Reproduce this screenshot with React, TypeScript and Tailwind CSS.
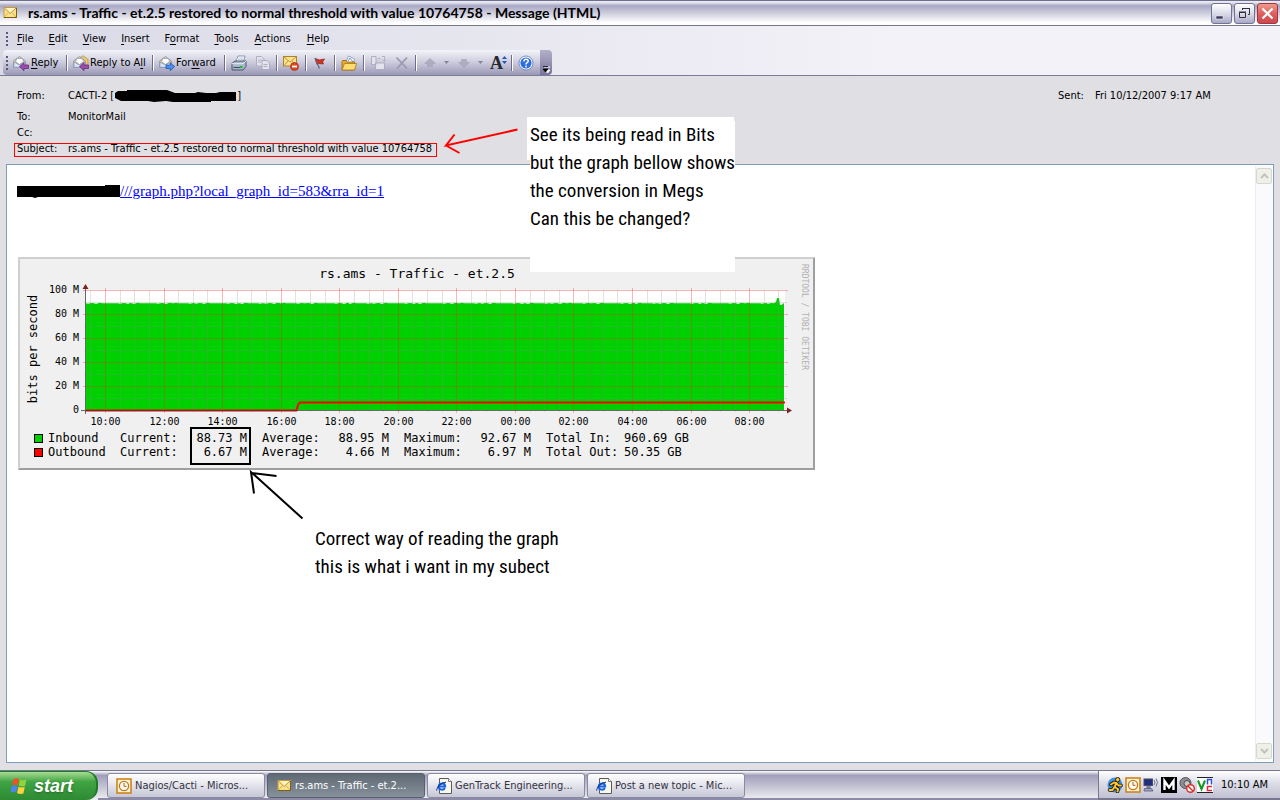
import type { ReactNode } from "react";
import { clsx } from "clsx";

const SUBJECT = "rs.ams - Traffic - et.2.5 restored to normal threshold with value 10764758";

/* ---------- Icons ---------- */

function Svg({ children, size = 16 }: { children: ReactNode; size?: number }) {
  return (
    <svg width={size} height={size} viewBox="0 0 16 16" className="shrink-0" aria-hidden="true">
      {children}
    </svg>
  );
}

const EnvelopeIcon = () => (
  <Svg>
    <rect x="2" y="2.500" width="12.500" height="10" fill="#fbe28a" stroke="#c29a3c" />
    <path d="M2.500 3 8.200 8.500 14 3" fill="#fff3c0" stroke="#b98f37" />
    <path d="M2.500 12 6.500 7.500M14 12 10 7.500" fill="none" stroke="#d5b04f" />
    <path d="M2 12.500h12.500V3" fill="none" stroke="#7d5c18" />
  </Svg>
);

function OpenLetter({ arrow, double }: { arrow: "left" | "right"; double?: boolean }) {
  return (
    <Svg>
      {double && <path d="M5.500 4 10 .7l5 3.800V10h-9z" fill="#f3c95a" stroke="#a9965c" strokeWidth=".8" />}
      <path d="M.6 6 6.500 1.500 12.400 6v6.500H.6z" fill="#f7d469" stroke="#8a93ad" strokeWidth=".9" />
      <path d="M2.500 6.500 4 3.500h5.500l1 3-4 3z" fill="#fff" stroke="#7d97c4" strokeWidth=".7" />
      <path d="M.9 7 6.500 10l5.600-3v5.300H.9z" fill="#d9e6f9" stroke="#8795b5" strokeWidth=".8" />
      {arrow === "left" ? (
        <path d="M6.500 11.500 11 7.800V10h4.500v3.500H11v2.200z" fill="#9c4cab" stroke="#5d2272" strokeWidth=".7" />
      ) : (
        <path d="M15.700 11.500 11.200 7.800V10H7v3.500h4.200v2.200z" fill="#4b8df0" stroke="#1c4ca6" strokeWidth=".7" />
      )}
    </Svg>
  );
}

const PrinterIcon = () => (
  <Svg>
    <path d="M5 6.500 7 1h7l-1.500 5.500z" fill="#fff" stroke="#7285a8" strokeWidth=".8" />
    <path d="M7.500 3h5M7 4.700h5" stroke="#a8b7d3" strokeWidth=".8" />
    <path d="M1 8.500 4 6h11v5.500L12 15H1z" fill="#a9b6c9" stroke="#3c4a63" strokeWidth=".9" />
    <path d="M1 8.700h11l3-2.500" fill="none" stroke="#e8eef7" />
    <path d="M2.500 12.500h7" stroke="#3c4a63" />
    <path d="M9 11h2.500v2H9z" fill="#1fbb2c" />
  </Svg>
);

const CopyIcon = () => (
  <Svg>
    <g fill="#e3e2ed" stroke="#a9a8bd" strokeWidth=".9">
      <path d="M1.500 1.500h5L9 4v7H1.500z" />
      <path d="M7 5.500h5L14.500 8v6.500H7z" />
      <path d="M3 5h4M3 7h3M8.500 9.500h4M8.500 11.500h4" />
    </g>
  </Svg>
);

const MoveIcon = () => (
  <Svg>
    <g fill="#e3e2ed" stroke="#a9a8bd" strokeWidth=".9">
      <path d="M1.500 1.500H6v8H1.500zM5.500 8h9v6.500h-9z" />
      <path d="M8 3.500h2M12 1.500h2.500v4M12.700 4.500l1.800 2 1.500-2" />
    </g>
  </Svg>
);

const DeleteMailIcon = () => (
  <Svg>
    <rect x=".5" y="1.500" width="13" height="9.500" fill="#fbe18a" stroke="#ab8330" />
    <path d="M.5 1.500 7 7l6.500-5.500M1 10.500 5 6M13 10.500 9 6" fill="none" stroke="#b98f37" strokeWidth=".9" />
    <circle cx="11.500" cy="11.500" r="4" fill="#dd4723" stroke="#a62b12" strokeWidth=".7" />
    <path d="M9 11.500h5" stroke="#fff" strokeWidth="1.800" />
  </Svg>
);

const FlagIcon = () => (
  <Svg>
    <path d="M3 3.500 7.500 5l5-1-2 3 1 2-5-.5-1.500 1z" fill="#d8321d" stroke="#8d1b10" strokeWidth=".7" />
    <path d="m3 3 4.500 10.500" stroke="#63637c" strokeWidth="1.200" />
  </Svg>
);

const FolderIcon = () => (
  <Svg>
    <path d="M5 7 7.500 1l6 3-1.500 5z" fill="#fff" stroke="#7b93bf" strokeWidth=".8" />
    <path d="M7 6 9 3l3 4" fill="none" stroke="#7b93bf" />
    <path d="M1 6.500V15h12.500V7H6L5 5.500H1.500z" fill="#e8ad2d" stroke="#95660f" strokeWidth=".8" />
    <path d="M1 15 3.500 8.500h12L13.500 15z" fill="#ffdc6f" stroke="#a5771b" strokeWidth=".8" />
  </Svg>
);

const CrossIcon = () => (
  <Svg>
    <path d="M2.500 2.500 13 13.500M13 2.500 3 13.500" stroke="#9a99ae" strokeWidth="1.800" />
  </Svg>
);

const ArrowIcon = ({ down }: { down?: boolean }) => (
  <Svg>
    <path
      d={down ? "M8 12.500 13.500 7.500h-3V4.500h-5v3h-3z" : "M8 3.500 13.500 8.500h-3v3h-5v-3h-3z"}
      fill="#aeadc0"
      stroke="#9f9db4"
      strokeWidth=".5"
    />
  </Svg>
);

const CaretIcon = () => (
  <svg width="5" height="3" viewBox="0 0 5 3" className="shrink-0" aria-hidden="true">
    <path d="M0 0h5L2.500 3z" fill="#8583a0" />
  </svg>
);

const HelpIcon = () => (
  <Svg>
    <circle cx="8" cy="8" r="7" fill="#fff" stroke="#5773b5" strokeWidth=".8" />
    <circle cx="8" cy="8" r="5.600" fill="#2e6fe0" />
    <path d="M5.900 6.400c0-2.800 4.300-2.600 4.300-.2C10.200 7.700 8 7.700 8 9.400" fill="none" stroke="#fff" strokeWidth="1.500" />
    <circle cx="8" cy="11.500" r=".9" fill="#fff" />
  </Svg>
);

const ClockIcon = () => (
  <Svg>
    <rect x="1" y="1" width="14" height="14" fill="#fdf3d6" stroke="#cf8419" strokeWidth="1.600" />
    <circle cx="8" cy="8" r="4.600" fill="#fffaf0" stroke="#c07a1c" strokeWidth="1.300" />
    <path d="M8 5v3.300h2.500" fill="none" stroke="#a86413" />
  </Svg>
);

const ExplorerIcon = () => (
  <Svg>
    <path d="M3.500.5h9l3 3v12h-12z" fill="#f8f8ec" stroke="#5a5a5a" />
    <path d="M12.500.5v3h3" fill="#fff" stroke="#5a5a5a" strokeWidth=".8" />
    <path d="M3 8.600h6.200C9.200 4.300 3 4.300 2.700 8.600c.2 3.600 4.800 4 6.200 1.400" fill="none" stroke="#1565e0" strokeWidth="2" />
    <path d="M.7 12.500C.3 9 5.500 4.300 10 4.300" fill="none" stroke="#12348c" strokeWidth="1.100" />
  </Svg>
);

const WindowsLogo = () => (
  <svg width="18" height="18" viewBox="0 0 18 18" aria-hidden="true">
    <path d="M3.500 2.500Q6 .5 9 2L7.700 8Q5 6.700 2 8.300z" fill="#f0532a" />
    <path d="M10 2.500q3 1.500 6.500 0L15 9q-3 1-6.300-.5z" fill="#8fd43c" />
    <path d="M1.700 9.300Q5 7.700 7.500 9L6 15.500Q3.500 14 .5 15.500z" fill="#4d86f0" />
    <path d="M8.500 9.700q3 1.300 6.300.3L13.300 16.500q-3 1-6.300-.5z" fill="#ffd23c" />
  </svg>
);

const RunnerIcon = () => (
  <Svg>
    <circle cx="8" cy="8" r="7.500" fill="#3f8fe0" />
    <g fill="none" strokeLinecap="round" strokeLinejoin="round">
      <path d="M9.500 6 7.500 10l3.500 2-.5 2.500M7.500 10 5.500 13H2.500M4 7.500l3-2 2.500.5 2 2.500H14" stroke="#111" strokeWidth="3.600" />
      <path d="M9.500 6 7.500 10l3.500 2-.5 2.500M7.500 10 5.500 13H2.500M4 7.500l3-2 2.500.5 2 2.500H14" stroke="#ffc62c" strokeWidth="2" />
    </g>
    <circle cx="10.700" cy="2.700" r="2.200" fill="#ffc62c" stroke="#111" strokeWidth=".9" />
  </Svg>
);

const NetworkIcon = () => (
  <Svg>
    <rect x="1" y="2" width="8.500" height="6.500" fill="#1f2f7d" stroke="#4b4b63" />
    <path d="M4 9h3v2H4zM1.500 11.500h7l1.500 2.500H1z" fill="#9fa6c4" stroke="#55597c" strokeWidth=".8" />
    <path d="M11 3q2 2.500 0 5M13 1.500q3 4 0 8" fill="none" stroke="#70708c" />
  </Svg>
);

const MIcon = () => (
  <Svg>
    <rect width="16" height="16" fill="#000" />
    <path d="M3.500 13V4L8 10.500 12.500 4v9" fill="none" stroke="#fff" strokeWidth="2.400" />
  </Svg>
);

const MutedIcon = () => (
  <Svg>
    <circle cx="6.500" cy="6" r="5.500" fill="#8e8e90" stroke="#55555a" />
    <circle cx="8" cy="6.500" r="3" fill="#c9c9cc" stroke="#4a4a50" />
    <circle cx="11.500" cy="11.500" r="3.800" fill="#fff" stroke="#d8332b" strokeWidth="1.500" />
    <path d="m9 9 5 5" stroke="#d8332b" strokeWidth="1.400" />
  </Svg>
);

const VncIcon = () => (
  <Svg>
    <rect width="16" height="16" fill="#fff" />
    <path d="M0 .5h16M0 15.500h16" stroke="#222" />
    <path d="M1 3.500 4.500 12 8 3.500" fill="none" stroke="#109a1d" strokeWidth="2" />
    <path d="M10.500 7.500v-5h4v5" fill="none" stroke="#2d4fe0" strokeWidth="1.500" />
    <path d="M15 9.500h-4.500v4H15" fill="none" stroke="#e02b3c" strokeWidth="1.500" />
  </Svg>
);

/* ---------- Window chrome ---------- */

function CaptionButton({ label, danger, children }: { label: string; danger?: boolean; children: ReactNode }) {
  return (
    <button
      type="button"
      aria-label={label}
      className={clsx(
        "flex size-[21px] items-center justify-center rounded-[3px] border",
        danger
          ? "border-[#a53440] bg-linear-to-b from-[#eb9a8d] via-[#e0605f] to-[#c9474f]"
          : "border-[#6f7396] bg-linear-to-b from-white via-[#dcdce9] to-[#a9a9c6]"
      )}
    >
      {children}
    </button>
  );
}

function TitleBar() {
  return (
    <div className="flex h-[26px] items-center border-t border-b border-t-[#716f8f] border-b-[#77768f] bg-linear-to-b from-[#e9e9f2] from-5% via-[#a9a8c4] via-20% to-white to-90% pr-0.5 pl-0.5">
      <EnvelopeIcon />
      <h1 className="ml-2.5 flex-1 font-[Lato] text-sm font-bold whitespace-nowrap text-black">
        {SUBJECT} - Message (HTML)
      </h1>
      <div className="flex gap-0.5">
        <CaptionButton label="Minimize">
          <svg width="15" height="15" viewBox="0 0 15 15">
            <path d="M2 10h7v3H2z" fill="#3c3b5e" stroke="#fff" strokeWidth=".5" />
          </svg>
        </CaptionButton>
        <CaptionButton label="Restore">
          <svg width="15" height="15" viewBox="0 0 15 15" fill="none" stroke="#2f2f3f">
            <path d="M5.500 4V2.500h7v6H11M5 2.500h8" />
            <path d="M2.500 6.500h6v5h-6zM2 6h7" />
          </svg>
        </CaptionButton>
        <CaptionButton label="Close" danger>
          <svg width="15" height="15" viewBox="0 0 15 15">
            <path d="m2.500 2.500 10 10m0-10-10 10" stroke="#fff" strokeWidth="2.200" />
          </svg>
        </CaptionButton>
      </div>
    </div>
  );
}

function Grip() {
  return (
    <svg width="3" height="16" viewBox="0 0 3 16" className="shrink-0" aria-hidden="true">
      <path d="M1 1v14" stroke="#5a5878" strokeWidth="2" strokeDasharray="2 2" />
    </svg>
  );
}

// [before, access key, after]
const MENUS = [
  ["", "F", "ile"],
  ["", "E", "dit"],
  ["", "V", "iew"],
  ["", "I", "nsert"],
  ["F", "o", "rmat"],
  ["", "T", "ools"],
  ["", "A", "ctions"],
  ["", "H", "elp"],
];

function MenuBar() {
  return (
    <nav className="flex h-6 items-center pt-px pl-1.5">
      <Grip />
      {MENUS.map(([before, key, after], i) => (
        <button key={key} type="button" className={clsx("pl-2", i < 5 ? "pr-[7px]" : "pr-2")}>
          {before}
          <u className="underline-offset-2">{key}</u>
          {after}
        </button>
      ))}
    </nav>
  );
}

function Separator() {
  return <div className="mx-[5px] h-4 w-0.5 border-r border-l border-r-white border-l-[#6d6b8c]" />;
}

function ToolButton({ label, className, children }: { label: string; className?: string; children: ReactNode }) {
  return (
    <button type="button" aria-label={label} className={clsx("flex items-center whitespace-nowrap", className)}>
      {children}
    </button>
  );
}

function Toolbar() {
  return (
    <div className="flex h-[25px] pl-[3px]">
      <div className="flex items-center rounded-l-sm bg-linear-to-b from-[#f4f4fa] via-[#cccbdc] to-[#9a98b6] pr-1.5 pl-[3px]">
        <Grip />
        <ToolButton label="Reply" className="ml-1 w-12 gap-0.5">
          <OpenLetter arrow="left" />
          <span>
            <u className="underline-offset-2">R</u>eply
          </span>
        </ToolButton>
        <Separator />
        <ToolButton label="Reply to All" className="w-[74px] gap-px">
          <OpenLetter arrow="left" double />
          <span>
            Reply to A<u className="underline-offset-2">l</u>l
          </span>
        </ToolButton>
        <Separator />
        <ToolButton label="Forward" className="w-[60px] gap-px">
          <OpenLetter arrow="right" />
          <span>
            For<u className="underline-offset-2">w</u>ard
          </span>
        </ToolButton>
        <Separator />
        <ToolButton label="Print" className="mr-2">
          <PrinterIcon />
        </ToolButton>
        <ToolButton label="Copy">
          <CopyIcon />
        </ToolButton>
        <Separator />
        <ToolButton label="Delete mail" className="w-[17px]">
          <DeleteMailIcon />
        </ToolButton>
        <Separator />
        <ToolButton label="Follow up" className="w-[17px]">
          <FlagIcon />
        </ToolButton>
        <Separator />
        <ToolButton label="Move to folder" className="w-[17px]">
          <FolderIcon />
        </ToolButton>
        <Separator />
        <ToolButton label="Create rule" className="mr-2">
          <MoveIcon />
        </ToolButton>
        <ToolButton label="Delete">
          <CrossIcon />
        </ToolButton>
        <Separator />
        <ToolButton label="Previous item" className="mr-[7px] gap-1.5">
          <ArrowIcon />
          <CaretIcon />
        </ToolButton>
        <ToolButton label="Next item" className="mr-[7px] gap-1.5">
          <ArrowIcon down />
          <CaretIcon />
        </ToolButton>
        <ToolButton label="Font size" className="w-4">
          <span className="font-['Liberation_Serif'] text-lg leading-4 font-bold text-[#26262e]">A</span>
          <svg width="5" height="10" viewBox="0 0 5 10" className="-ml-px mb-1.5 shrink-0">
            <path d="M0 4h5L2.500 1zM0 6h5L2.500 9z" fill="#2a55b5" />
          </svg>
        </ToolButton>
        <Separator />
        <ToolButton label="Help">
          <HelpIcon />
        </ToolButton>
      </div>
      <button
        type="button"
        aria-label="Toolbar options"
        className="flex w-3 items-end justify-center rounded-r-sm bg-linear-to-b from-[#b3b1c8] to-[#77759a] pb-0.5"
      >
        <svg width="7" height="7" viewBox="0 0 7 7">
          <path d="M1 1h6M2 4h5L4.500 7z" stroke="#fff" fill="#fff" />
          <path d="M0 .5h5M0 3h5L2.500 6z" stroke="#000" fill="#000" strokeWidth=".8" />
        </svg>
      </button>
    </div>
  );
}

/* ---------- Message ---------- */

function Field({ label, children, className }: { label: string; children?: ReactNode; className?: string }) {
  return (
    <div className={clsx("flex h-4 items-center", className)}>
      <dt className="w-[51px]">{label}</dt>
      <dd>{children}</dd>
    </div>
  );
}

function MessageHeader() {
  return (
    <div className="flex justify-between pt-3 pb-[7px] pl-[17px]">
      <dl>
        <Field label="From:" className="mb-[5px]">
          <span className="flex items-center">
            CACTI-2 [
            <svg width="123" height="14" viewBox="0 0 123 14" aria-hidden="true">
              <path d="M1 4 4 2h9V1h40l8 3h20l3-1 8 1h10l4-1h16v9h-25v1H59l-7-1-12 1-6-1H7L1 9z" />
            </svg>
            ]
          </span>
        </Field>
        <Field label="To:">MonitorMail</Field>
        <Field label="Cc:" />
        <Field label="Subject:">{SUBJECT}</Field>
      </dl>
      <dl className="flex h-4 items-center">
        <dt className="w-[37px]">Sent:</dt>
        <dd className="w-[185px]">Fri 10/12/2007 9:17 AM</dd>
      </dl>
    </div>
  );
}

const PLOT_LEFT = 65.5;
const PLOT_RIGHT = 765;
const ZERO_Y = 151.5;
const HOURS = ["10:00", "12:00", "14:00", "16:00", "18:00", "20:00", "22:00", "00:00", "02:00", "04:00", "06:00", "08:00"];
const tickX = (halfHours: number) => Math.round(85 + halfHours * 14.64) + 0.5;

// Steady traffic just under 90 M with a little jitter, then one short peak at the end
const trafficPoints = Array.from({ length: 345 }, (_, i) => {
  const jitter = [0, 0.6, 0, 0, -0.5, 0, 0, 0, 0.4, 0, 0, -0.3, 0][(i * 7 + (i % 11)) % 13];
  return `${66 + i * 2},${44.3 + jitter}`;
}).join(" ");

function TrafficPlot() {
  return (
    <svg width="793" height="172" viewBox="0 0 793 172" className="font-['DejaVu_Sans_Mono']" role="img" aria-label="Traffic graph">
      <text x="397" y="19" textAnchor="middle" fontSize="13">
        rs.ams - Traffic - et.2.5
      </text>
      <rect x="66" y="31" width="699" height="120" fill="#fff" />
      <polygon points={`66,151 ${trafficPoints} 756,43 757,39 759,39 760,46 762,46 763,44 764,45 764,151`} fill="#00cf00" />

      {/* Minor grid */}
      <g stroke="#8c8c8c" strokeOpacity=".25" shapeRendering="crispEdges">
        {Array.from({ length: 48 }, (_, i) => i - 1).map((n) =>
          n % 4 === 0 ? null : <path key={n} d={`M${tickX(n)} 31V153`} />
        )}
        {[1, 3, 5, 7, 9].map((n) => (
          <path key={n} d={`M64 ${ZERO_Y - n * 12}H767`} />
        ))}
      </g>

      {/* Major grid */}
      <g stroke="#e63232" strokeOpacity=".35" shapeRendering="crispEdges">
        {HOURS.map((hour, i) => (
          <path key={hour} d={`M${tickX(i * 4)} 29V154`} />
        ))}
        {[1, 2, 3, 4, 5].map((n) => (
          <path key={n} d={`M63 ${ZERO_Y - n * 24}H768`} />
        ))}
      </g>

      <path d={`M${PLOT_LEFT} ${ZERO_Y}H276.500L278 146 280 143.500H${PLOT_RIGHT}`} fill="none" stroke="#f00" strokeWidth="2" />
      <path d="M61 151.500H769M65.500 155V30" stroke="#3c3c3c" strokeOpacity=".75" shapeRendering="crispEdges" />
      <path d="m65.500 25 3 5h-6zM772 151.500l-5-3v6z" fill="#802020" />

      <g fontSize="10" textAnchor="middle">
        {HOURS.map((hour, i) => (
          <text key={hour} x={tickX(i * 4)} y="166">
            {hour}
          </text>
        ))}
      </g>
      <g fontSize="10" textAnchor="end">
        {["0", "20 M", "40 M", "60 M", "80 M", "100 M"].map((label, i) => (
          <text key={label} x="59" y={154 - i * 24}>
            {label}
          </text>
        ))}
      </g>
      <text transform="translate(17 90) rotate(-90)" textAnchor="middle" fontSize="12">
        bits per second
      </text>
      <text transform="translate(782 5) rotate(90)" fontSize="8" fill="#b0b0b0">
        RRDTOOL / TOBI OETIKER
      </text>
    </svg>
  );
}

const LEGEND = [
  { name: "Inbound", swatch: "bg-[#00cf00]", current: "88.73 M", average: "88.95 M", maximum: "92.67 M", totalLabel: "Total In:", total: "960.69 GB" },
  { name: "Outbound", swatch: "bg-[#ff0000]", current: "6.67 M", average: "4.66 M", maximum: "6.97 M", totalLabel: "Total Out:", total: "50.35 GB" },
];

function Legend() {
  return (
    <table className="ml-3.5 table-fixed font-['DejaVu_Sans_Mono'] text-xs leading-[14px] whitespace-nowrap">
      <tbody>
        {LEGEND.map((row) => (
          <tr key={row.name} className="h-3.5">
            <th scope="row" className="w-[86px] p-0 text-left font-normal">
              <span className="flex items-center gap-[5px]">
                <span className={clsx("size-[9px] border border-black", row.swatch)} />
                {row.name}
              </span>
            </th>
            <td className="w-[60px] p-0">Current:</td>
            <td className="w-[67px] p-0 text-right">{row.current}</td>
            <td className="w-[76px] p-0 pl-[15px]">Average:</td>
            <td className="w-[66px] p-0 text-right">{row.average}</td>
            <td className="w-[76px] p-0 pl-[15px]">Maximum:</td>
            <td className="w-[66px] p-0 text-right">{row.maximum}</td>
            <td className="w-[93px] p-0 pl-[15px]">{row.totalLabel}</td>
            <td className="p-0">{row.total}</td>
          </tr>
        ))}
      </tbody>
    </table>
  );
}

function ScrollButton({ label, up }: { label: string; up?: boolean }) {
  return (
    <button
      type="button"
      aria-label={label}
      className="flex size-4 items-center justify-center rounded-xs border border-[#d8d8c8] bg-[#f0f0ea]"
    >
      <svg width="9" height="6" viewBox="0 0 9 6">
        <path d={up ? "m1 5 3.500-3.500L8 5" : "m1 1 3.500 3.500L8 1"} fill="none" stroke="#c3c3b8" strokeWidth="2" />
      </svg>
    </button>
  );
}

function MessageBody() {
  return (
    <div className="mx-1.5 mb-[7px] flex min-h-0 flex-1 border border-[#7f9db9] bg-white p-px">
      <main className="min-w-0 flex-1 pt-[15px] pl-2.5">
        <a href="#graph" className="-ml-px flex w-fit items-center font-['Liberation_Serif'] text-[15px] leading-5 text-[#0000ff] underline">
          <svg width="103" height="13" viewBox="0 0 103 13" aria-hidden="true">
            <path d="M0 1h88V0h15v12H21l-3 1-3-1H0z" fill="#000" />
          </svg>
          ///graph.php?local_graph_id=583&amp;rra_id=1
        </a>
        <figure
          id="graph"
          className="mt-14 w-[797px] border-2 border-t-[#cfcfcf] border-r-[#9f9f9f] border-b-[#9f9f9f] border-l-[#cfcfcf] bg-[#f0f0f0] pb-[9px]"
        >
          <TrafficPlot />
          <Legend />
        </figure>
      </main>
      <div className="flex w-[17px] flex-col justify-between border-l border-[#eeedf0] bg-[#fafafd] py-0.5">
        <ScrollButton label="Scroll up" up />
        <ScrollButton label="Scroll down" />
      </div>
    </div>
  );
}

/* ---------- Hand-drawn notes on top of the window ---------- */

function Annotations() {
  return (
    <div className="pointer-events-none absolute top-0 left-0 font-['Roboto_Condensed','Liberation_Sans',sans-serif] text-[19px] leading-7 text-black">
      <div className="absolute top-[117px] left-[527px] h-[43px] w-[207px] bg-white" />
      <p className="absolute top-[121px] left-[530px] h-[151px] w-[205px] bg-white whitespace-nowrap">
        See its being read in Bits
        <br />
        but the graph bellow shows
        <br />
        the conversion in Megs
        <br />
        Can this be changed?
      </p>
      <p className="absolute top-[525px] left-[315px] whitespace-nowrap">
        Correct way of reading the graph
        <br />
        this is what i want in my subect
      </p>
      <svg width="600" height="600" viewBox="0 0 600 600" fill="none" className="absolute top-0 left-0" aria-hidden="true">
        <g stroke="#f00">
          <path d="M14.500 143.500h422v13h-422z" shapeRendering="crispEdges" />
          <path d="M517.500 129.500 446 145.500l8.500-11M446 145.500l13.500 7.500" strokeWidth="2" />
        </g>
        <g stroke="#000" strokeWidth="2">
          <path d="M191 428h59v36h-59z" shapeRendering="crispEdges" />
          <path d="M302.500 518.500 251 472l3 21.500M251 473l25.500 3" />
        </g>
      </svg>
    </div>
  );
}

/* ---------- Taskbar ---------- */

const TASKS = [
  { title: "Nagios/Cacti - Micros...", icon: <ClockIcon /> },
  { title: "rs.ams - Traffic - et.2...", icon: <EnvelopeIcon />, active: true },
  { title: "GenTrack Engineering...", icon: <ExplorerIcon /> },
  { title: "Post a new topic - Mic...", icon: <ExplorerIcon /> },
];

function Taskbar() {
  return (
    <footer className="flex h-[30px] shrink-0 border-t border-[#77768f] bg-linear-to-b from-white via-[#a19fba] via-15% to-[#f0f0f3]">
      <button
        type="button"
        className="flex w-[98px] items-center gap-1.5 rounded-r-xl border-t border-r-2 border-[#1d7a25] bg-linear-to-b from-[#a5dd92] via-[#3fa443] via-35% to-[#2e8a33] pl-2.5 font-['Liberation_Sans'] text-lg font-bold text-white italic text-shadow-md"
      >
        <WindowsLogo />
        start
      </button>
      <div className="flex flex-1 gap-0.5 border-b-2 border-[#8c8aa6] pt-0.5 pl-[9px]">
        {TASKS.map((task) => (
          <button
            key={task.title}
            type="button"
            className={clsx(
              "flex w-[158px] items-center gap-[3px] rounded-[3px] border pl-2",
              task.active
                ? "border-[#56616b] bg-linear-to-b from-[#5f6a74] to-[#87919b] text-white"
                : "border-[#8a8aa0] bg-linear-to-b from-white via-[#e3e3ed] to-[#c6c7d6] text-[#33333b]"
            )}
          >
            {task.icon}
            <span className="truncate">{task.title}</span>
          </button>
        ))}
      </div>
      <div className="flex w-[182px] items-center gap-0.5 border-b-2 border-l border-[#77768f] bg-linear-to-b from-white via-[#e0e0ea] via-40% to-[#c0c0d2] pl-2">
        <RunnerIcon />
        <ClockIcon />
        <NetworkIcon />
        <MIcon />
        <MutedIcon />
        <VncIcon />
        <time className="ml-1.5 whitespace-nowrap">10:10 AM</time>
      </div>
    </footer>
  );
}

export default function App() {
  return (
    <div className="relative flex h-screen min-h-[620px] flex-col overflow-hidden bg-[#e0dfe3] font-['DejaVu_Sans_Condensed','DejaVu_Sans',sans-serif] text-[11px] leading-4 text-black">
      <TitleBar />
      <header className="border-b border-[#7c7b99] bg-linear-to-r from-[#d9d9e6] to-[#f3f2f8] to-70%">
        <MenuBar />
        <Toolbar />
      </header>
      <MessageHeader />
      <MessageBody />
      <Taskbar />
      <Annotations />
    </div>
  );
}
